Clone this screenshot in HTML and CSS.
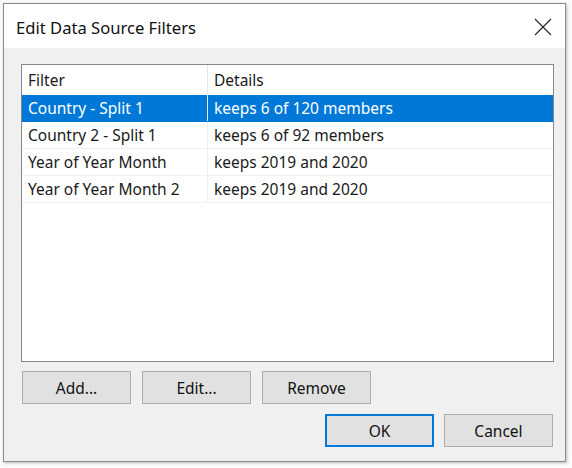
FILE: index.html
```html
<!DOCTYPE html>
<html>
<head>
<meta charset="utf-8">
<link rel="stylesheet" href="styles.css">
</head>
<body>
<div class="window">
  <div class="titlebar">
    <span class="title">Edit Data Source Filters</span>
    <svg class="close" width="18" height="18" viewBox="0 0 18 18"><path d="M1 1 L17 17 M17 1 L1 17" stroke="#222" stroke-width="1.1" fill="none"/></svg>
  </div>
  <div class="content">
    <div class="list">
      <div class="row header">
        <div class="c1">Filter</div>
        <div class="c2">Details</div>
      </div>
      <div class="row selected">
        <div class="c1">Country - Split 1</div>
        <div class="c2">keeps 6 of 120 members</div>
      </div>
      <div class="row">
        <div class="c1">Country 2 - Split 1</div>
        <div class="c2">keeps 6 of 92 members</div>
      </div>
      <div class="row">
        <div class="c1">Year of Year Month</div>
        <div class="c2">keeps 2019 and 2020</div>
      </div>
      <div class="row">
        <div class="c1">Year of Year Month 2</div>
        <div class="c2">keeps 2019 and 2020</div>
      </div>
    </div>
    <div class="actions">
      <button class="btn">Add...</button>
      <button class="btn">Edit...</button>
      <button class="btn">Remove</button>
    </div>
    <div class="footer">
      <button class="btn primary">OK</button>
      <button class="btn">Cancel</button>
    </div>
  </div>
</div>
</body>
</html>
```
FILE: styles.css
```css
html, body {
  margin: 0;
  padding: 0;
}
body {
  width: 572px;
  height: 468px;
  background: #fbfbfb;
  font-family: "Noto Sans", "Open Sans", sans-serif;
  color: #1a1a1a;
  overflow: hidden;
}
.window {
  margin: 3px 0 0 3px;
  width: 561px;
  height: 457px;
  border: 1px solid #8a8a8a;
  background: #f0f0f0;
  box-shadow: 1px 1px 3px rgba(0,0,0,0.25);
  display: flex;
  flex-direction: column;
}
.titlebar {
  height: 44px;
  background: #ffffff;
  display: flex;
  align-items: center;
  justify-content: space-between;
  padding: 0 12px 0 12px;
  flex: none;
}
.title {
  font-size: 16.6px;
  color: #111;
  margin-top: 2px;
}
.close {
  margin-right: 1px;
  margin-top: 1px;
}
.content {
  padding: 16px 11px 0 17px;
  display: flex;
  flex-direction: column;
}
.list {
  height: 296px;
  background: #fff;
  border: 1px solid #828790;
  display: flex;
  flex-direction: column;
}
.row {
  display: flex;
  height: 26px;
  border-bottom: 1px solid #f0f0f0;
  font-size: 15.5px;
  line-height: 27px;
}
.row .c1 {
  width: 179px;
  padding-left: 6px;
  border-right: 1px solid #f0f0f0;
  white-space: nowrap;
}
.row .c2 {
  padding-left: 6px;
  white-space: nowrap;
}
.header {
  height: 30px;
  line-height: 31px;
  border-bottom: none;
}
.header .c1 {
  border-right: 1px solid #e5e5e5;
}
.selected {
  background: #0078d7;
  color: #fff;
  border-bottom-color: #0078d7;
}
.selected .c1 {
  border-right-color: #e8e8e8;
}
.actions {
  display: flex;
  gap: 11px;
  margin-top: 9px;
  padding-left: 1px;
}
.btn {
  width: 109px;
  height: 33px;
  background: #e1e1e1;
  border: 1px solid #adadad;
  font-family: "Noto Sans", "Open Sans", sans-serif;
  font-size: 15.5px;
  color: #111;
  padding: 0;
}
.footer {
  display: flex;
  justify-content: flex-end;
  gap: 10px;
  margin-top: 10px;
  padding-right: 1px;
}
.primary {
  border: 2px solid #0078d7;
}
```
